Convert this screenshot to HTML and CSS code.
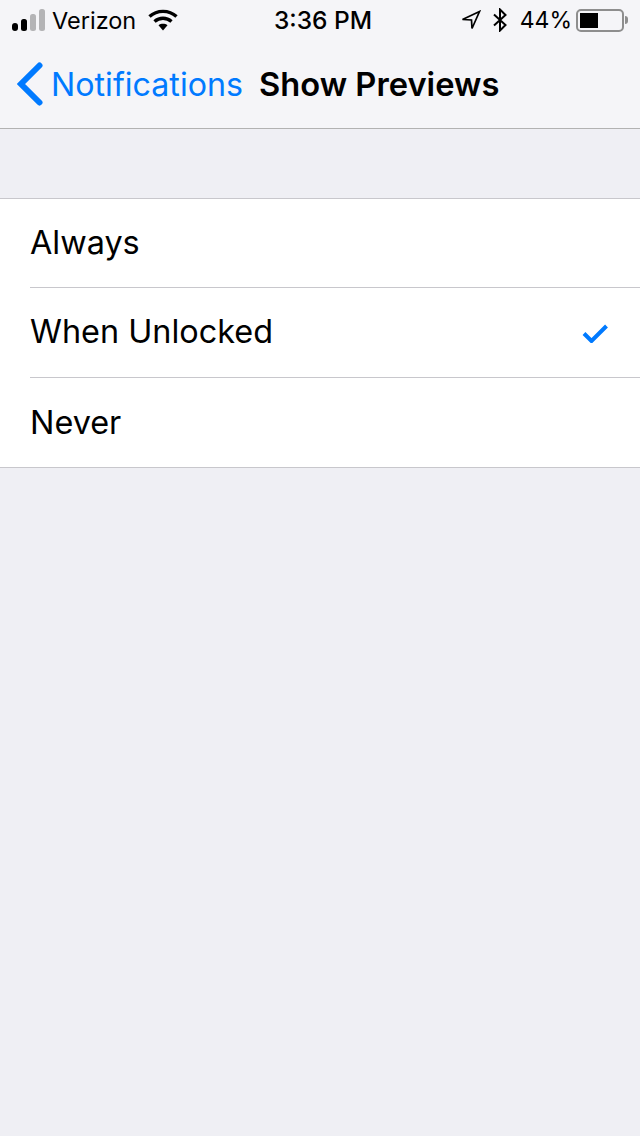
FILE: index.html
```html
<!DOCTYPE html>
<html lang="en">
  <head>
    <meta charset="UTF-8" />
    <meta name="viewport" content="width=device-width, initial-scale=1.0" />
    <title>Show Previews</title>
    <link rel="stylesheet" href="styles.css">
  </head>
  <body>
    <header class="top-bar">
      <div class="status-bar">
        <div class="status-left">
          <svg class="signal" width="34" height="22" viewBox="0 0 34 22">
            <rect x="0" y="14" width="6" height="8" rx="3" fill="#000" />
            <rect x="9" y="10" width="6" height="12" rx="2.5" fill="#000" />
            <rect x="18" y="5" width="6" height="17" rx="2.5" fill="#b4b4b6" />
            <rect x="27" y="0" width="6" height="22" rx="2.5" fill="#b4b4b6" />
          </svg>
          <span class="carrier">Verizon</span>
          <svg class="wifi" width="30" height="22" viewBox="0 0 30 22">
            <path d="M1.500 7.500C9 .6 21 .6 28.500 7.500" fill="none" stroke="#000" stroke-width="3.400" />
            <path d="M6.500 12.500C11.500 8.200 18.500 8.200 23.500 12.500" fill="none" stroke="#000" stroke-width="3.400" />
            <path d="M10.500 16.200C13 14.300 17 14.300 19.500 16.200L15 21.500Z" fill="#000" />
          </svg>
        </div>
        <div class="status-time">3:36 PM</div>
        <div class="status-right">
          <svg class="location" width="20" height="20" viewBox="0 0 20 20">
            <path d="M18.500 1.500L1.500 9.500L10.500 10L11 18.500Z" fill="none" stroke="#000" stroke-width="1.700" stroke-linejoin="miter" />
          </svg>
          <svg class="bluetooth" width="16" height="24" viewBox="0 0 16 24">
            <path d="M2 6.500L13.500 17L8 22.500V1.500L13.500 7L2 17.500" fill="none" stroke="#000" stroke-width="2" />
          </svg>
          <span class="battery-text">44%</span>
          <div class="battery">
            <div class="battery-body">
              <div class="battery-fill"></div>
            </div>
            <div class="battery-tip"></div>
          </div>
        </div>
      </div>
      <nav class="nav-bar">
        <a class="back-link" href="#">
          <svg class="back-icon" width="26" height="44" viewBox="0 0 26 44">
            <path d="M22.500 3.500L4 22L22.500 40.500" fill="none" stroke="#007aff" stroke-width="6" stroke-linecap="round" stroke-linejoin="miter" />
          </svg>
          <span>Notifications</span>
        </a>
        <h1>Show Previews</h1>
      </nav>
    </header>

    <main class="content">
      <ul class="option-list">
        <li class="option">Always</li>
        <li class="option">
          When Unlocked
          <svg class="check" width="28" height="22" viewBox="0 0 28 22">
            <path d="M2 12.500L9.500 20L24.500 5" fill="none" stroke="#007aff" stroke-width="4" />
          </svg>
        </li>
        <li class="option">Never</li>
      </ul>
    </main>
  </body>
</html>
```

FILE: styles.css
```css
* {
  box-sizing: border-box;
}

body {
  margin: 0;
  width: 640px;
  height: 1136px;
  overflow: hidden;
  background-color: #efeff4;
  color: #000;
  font-family: Inter, "Liberation Sans", sans-serif;
}

.top-bar {
  height: 129px;
  background-color: #f5f5f8;
  border-bottom: 1px solid #b2b2b2;
}

.status-bar {
  display: flex;
  align-items: center;
  height: 40px;
  padding: 0 12px;
  font-size: 23.5px;
}

.status-left,
.status-right {
  display: flex;
  align-items: center;
  flex: 1;
}

.status-right {
  justify-content: flex-end;
}

.carrier {
  margin-left: 6px;
}

.wifi {
  margin-left: 12px;
}

.status-time {
  margin-left: 6px;
  font-size: 24.5px;
  font-weight: 500;
}

.location {
  margin-right: 11px;
}

.bluetooth {
  margin-right: 12px;
}

.battery-text {
  font-size: 23px;
}

.battery {
  display: flex;
  align-items: center;
  margin-left: 4px;
}

.battery-body {
  width: 48px;
  height: 23px;
  padding: 2px;
  border: 2px solid #8e8e8e;
  border-radius: 5px;
}

.battery-fill {
  width: 18px;
  height: 100%;
  background-color: #000;
}

.battery-tip {
  width: 3px;
  height: 8px;
  margin-left: 1px;
  background-color: #8e8e8e;
  border-radius: 0 3px 3px 0;
}

.nav-bar {
  display: flex;
  align-items: center;
  height: 88px;
  padding-left: 17px;
}

.back-link {
  display: flex;
  align-items: center;
  color: #007aff;
  font-size: 32.2px;
  text-decoration: none;
}

.back-icon {
  margin-right: 8px;
}

h1 {
  margin: 0 0 0 16px;
  font-size: 32.7px;
  font-weight: 600;
}

.content {
  padding-top: 69px;
}

.option-list {
  margin: 0;
  padding: 0;
  list-style: none;
  background-color: #fff;
  border-top: 1px solid #c8c7cc;
  border-bottom: 1px solid #c8c7cc;
}

.option {
  display: flex;
  align-items: center;
  justify-content: space-between;
  height: 90px;
  margin-left: 30px;
  padding-right: 30px;
  padding-bottom: 2px;
  border-bottom: 1px solid #c8c7cc;
  font-size: 32.4px;
}

.option:first-child {
  height: 89px;
}

.option:last-child {
  height: 89px;
  padding-bottom: 0;
  border-bottom: none;
}
```
